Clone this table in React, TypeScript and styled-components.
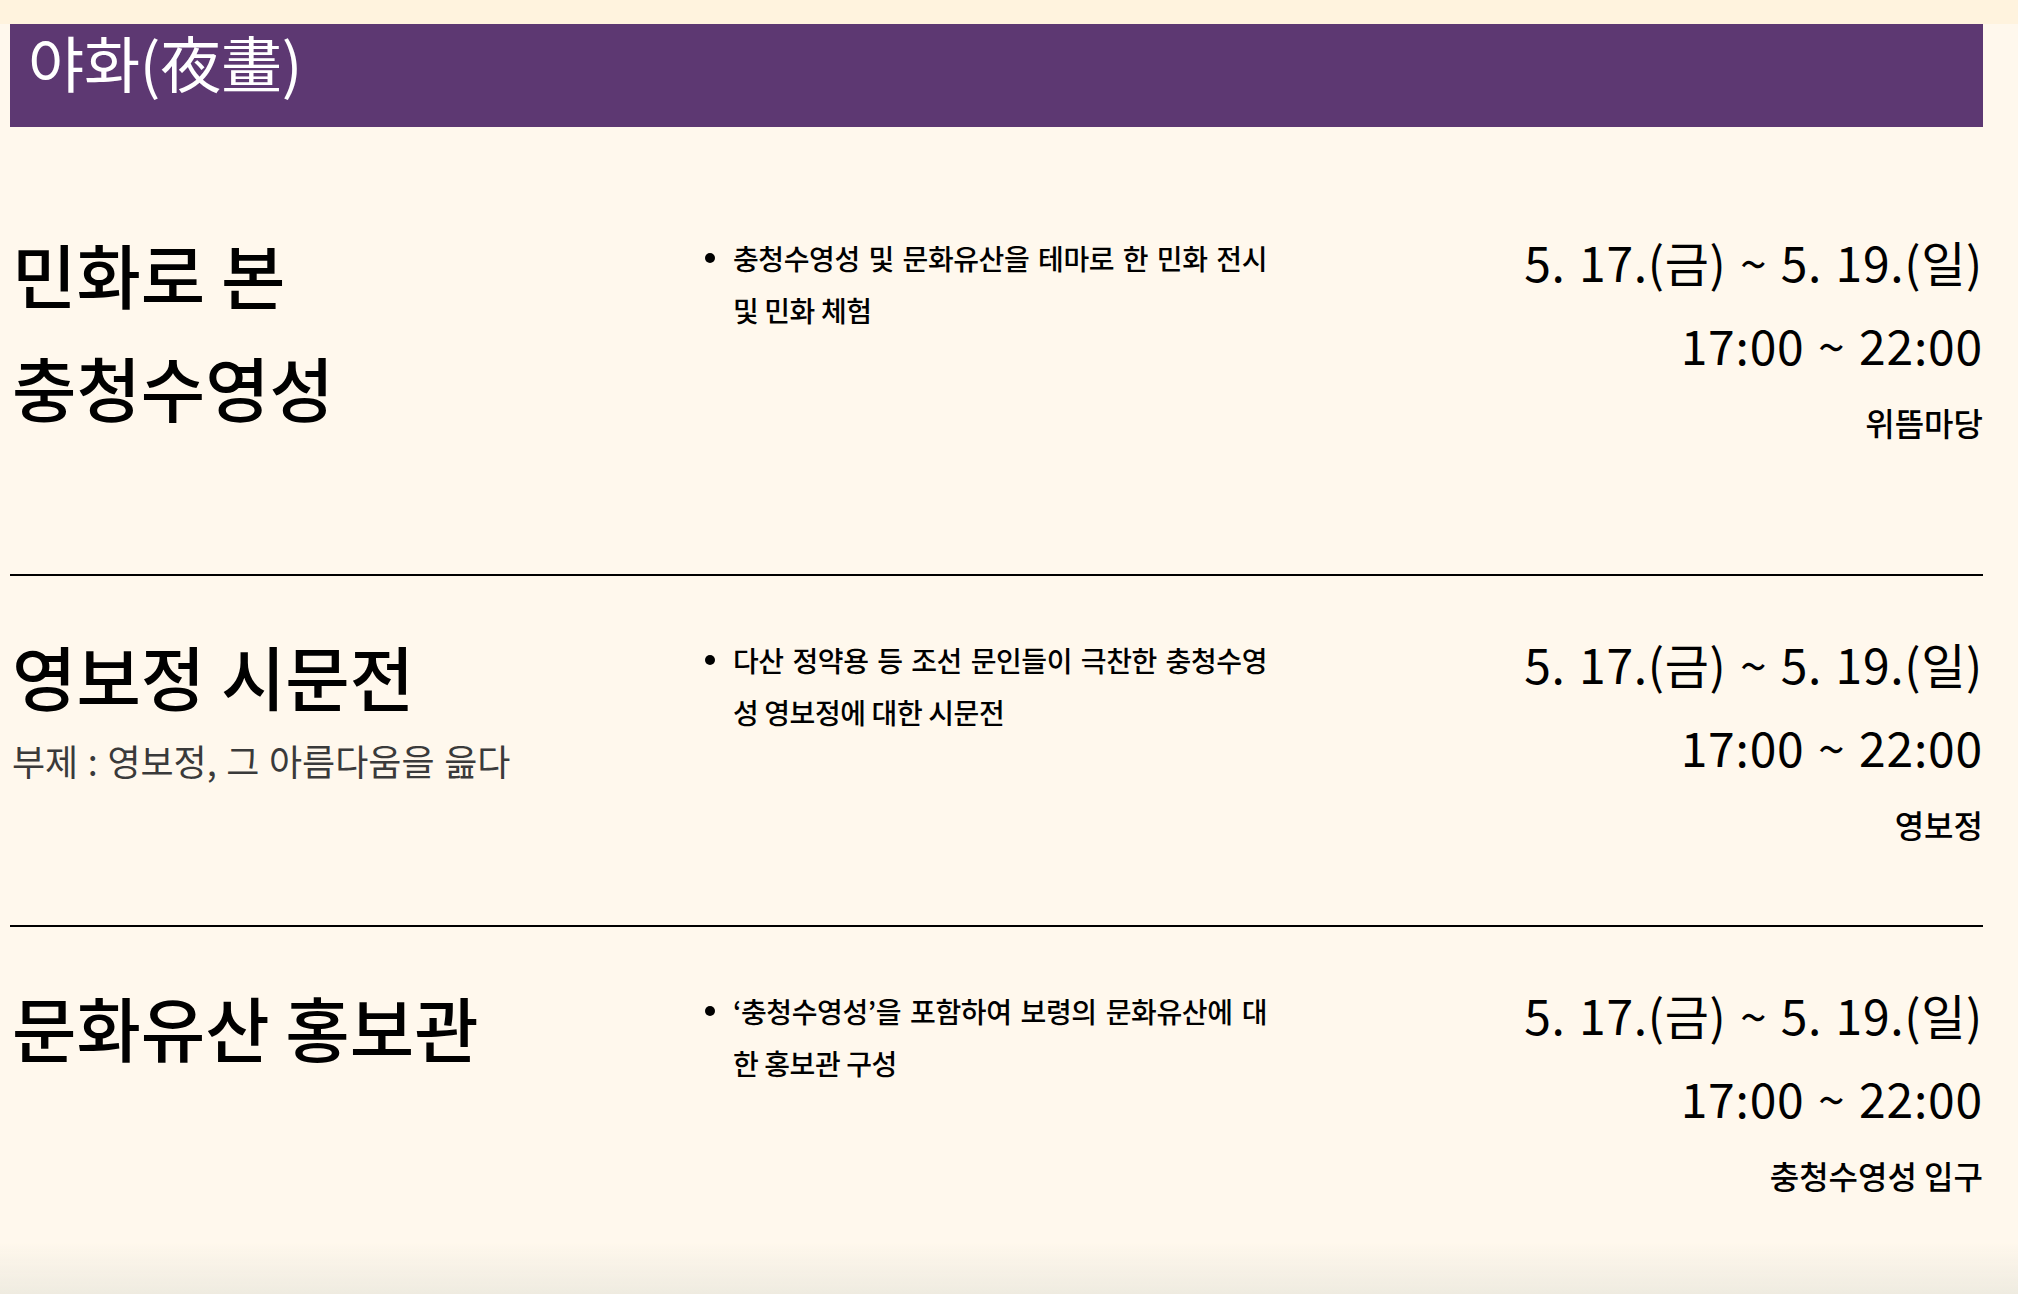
import React from "react";
import styled, { createGlobalStyle } from "styled-components";

const GlobalStyle = createGlobalStyle`
  html, body {
    margin: 0;
    padding: 0;
    background: #fff8ed;
  }
  body {
    font-family: "Noto Sans CJK KR", "Noto Sans", sans-serif;
    color: #000;
  }
  * { box-sizing: border-box; }
`;

const TopStrip = styled.div`
  height: 24px;
  background: #fff3de;
`;

const Page = styled.main`
  width: 1973px;
  margin-left: 10px;
`;

const SectionBar = styled.h1`
  margin: 0 0 47px;
  background: #5d3872;
  color: #fff;
  font-family: "Noto Sans CJK KR", sans-serif;
  font-weight: 400;
  font-size: 61px;
  line-height: 76px;
  height: 103px;
  padding: 0 18px;
  letter-spacing: -0.2px;
`;

const Row = styled.section<{ $minHeight: number; $divider?: boolean }>`
  display: grid;
  grid-template-columns: 695px 562px 1fr;
  align-items: start;
  min-height: ${(p) => p.$minHeight}px;
  padding-top: 47px;
  border-bottom: ${(p) => (p.$divider ? "2px solid #000" : "none")};
`;

const TitleBlock = styled.div`
  display: flex;
  flex-direction: column;
  margin-top: -4px;
`;

const Title = styled.h2`
  margin: 0;
  font-size: 70px;
  font-weight: 500;
  line-height: 113px;
  letter-spacing: 0;
  padding-left: 2px;
`;

const Subtitle = styled.p`
  margin: 0;
  font-size: 36px;
  font-weight: 400;
  line-height: 56px;
  color: #3a3a3a;
  letter-spacing: 0;
  word-spacing: 1.5px;
  padding-left: 2px;
`;

const Bullets = styled.ul`
  margin: 0;
  padding: 12px 0 0;
  list-style: none;
`;

const Bullet = styled.li`
  display: flex;
  align-items: flex-start;
  gap: 18px;

  &::before {
    content: "";
    flex: 0 0 10px;
    width: 10px;
    height: 10px;
    margin-top: 20px;
    border-radius: 50%;
    background: #000;
  }
`;

const DescText = styled.div`
  width: 534px;
  font-size: 28px;
  font-weight: 500;
  line-height: 52px;
  letter-spacing: -0.4px;
  margin-top: -1px;
`;

const DescLine = styled.span<{ $justify: boolean }>`
  display: block;
  white-space: nowrap;
  text-align: ${(p) => (p.$justify ? "justify" : "left")};
  text-align-last: ${(p) => (p.$justify ? "justify" : "left")};
`;

const Schedule = styled.div`
  display: flex;
  flex-direction: column;
  align-items: flex-end;
  text-align: right;
`;

const DateLine = styled.div`
  font-size: 48px;
  font-weight: 400;
  line-height: 81px;
  letter-spacing: 0.7px;
  word-spacing: 2px;
`;

const TimeLine = styled.div`
  font-size: 48px;
  font-weight: 400;
  line-height: 84px;
  letter-spacing: 0.8px;
  word-spacing: 2px;
`;

const Place = styled.div`
  font-size: 32px;
  font-weight: 500;
  line-height: 73px;
  letter-spacing: 0;
`;

const BottomFade = styled.div`
  position: fixed;
  left: 0;
  right: 0;
  bottom: 0;
  height: 52px;
  pointer-events: none;
  background: linear-gradient(to bottom, rgba(239, 235, 224, 0), rgba(239, 235, 224, 1));
`;

type Program = {
  title: string[];
  subtitle?: string;
  desc: string[];
  place: string;
  minHeight: number;
  divider: boolean;
};

const programs: Program[] = [
  {
    title: ["민화로 본", "충청수영성"],
    desc: ["충청수영성 및 문화유산을 테마로 한 민화 전시", "및 민화 체험"],
    place: "위뜸마당",
    minHeight: 402,
    divider: true,
  },
  {
    title: ["영보정 시문전"],
    subtitle: "부제 : 영보정, 그 아름다움을 읊다",
    desc: ["다산 정약용 등 조선 문인들이 극찬한 충청수영", "성 영보정에 대한 시문전"],
    place: "영보정",
    minHeight: 351,
    divider: true,
  },
  {
    title: ["문화유산 홍보관"],
    desc: ["‘충청수영성’을 포함하여 보령의 문화유산에 대", "한 홍보관 구성"],
    place: "충청수영성 입구",
    minHeight: 351,
    divider: false,
  },
];

export default function App() {
  return (
    <>
      <GlobalStyle />
      <TopStrip />
      <Page>
        <SectionBar>야화(夜畫)</SectionBar>
        {programs.map((p, i) => (
          <Row key={i} $minHeight={p.minHeight} $divider={p.divider}>
            <TitleBlock>
              {p.title.map((t, j) => (
                <Title key={j}>{t}</Title>
              ))}
              {p.subtitle && <Subtitle>{p.subtitle}</Subtitle>}
            </TitleBlock>
            <Bullets>
              <Bullet>
                <DescText>
                  {p.desc.map((line, j) => (
                    <DescLine key={j} $justify={j < p.desc.length - 1}>
                      {line}
                    </DescLine>
                  ))}
                </DescText>
              </Bullet>
            </Bullets>
            <Schedule>
              <DateLine>5. 17.(금) ~ 5. 19.(일)</DateLine>
              <TimeLine>17:00 ~ 22:00</TimeLine>
              <Place>{p.place}</Place>
            </Schedule>
          </Row>
        ))}
      </Page>
      <BottomFade />
    </>
  );
}
